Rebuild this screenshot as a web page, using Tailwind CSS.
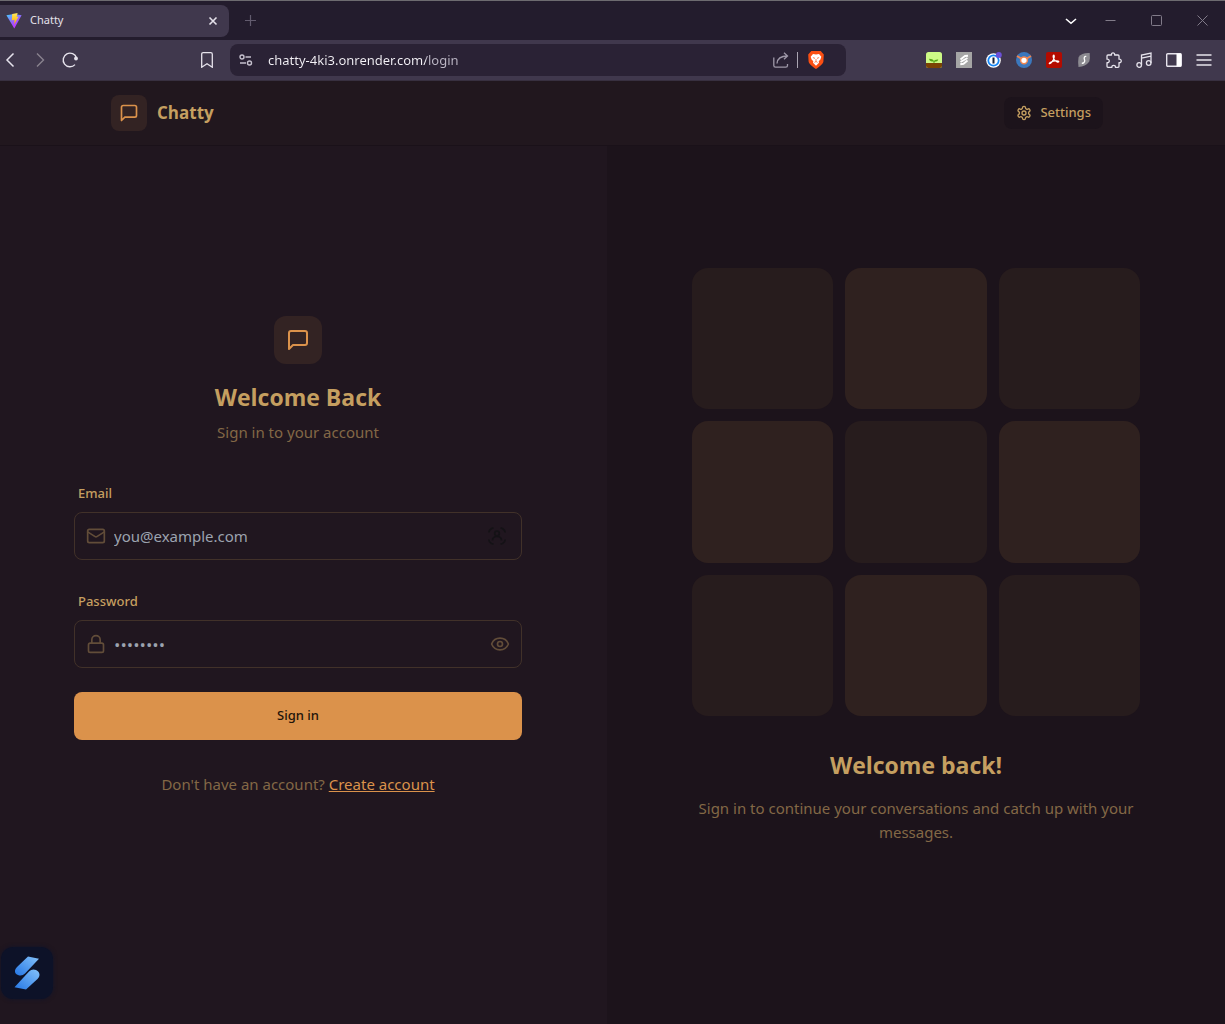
<!DOCTYPE html>
<html lang="en">
<head>
<meta charset="utf-8">
<meta name="viewport" content="width=device-width, initial-scale=1">
<title>Chatty</title>
<script src="https://cdn.jsdelivr.net/npm/@tailwindcss/browser@4"></script>
</head>
<body class="flex min-h-screen flex-col overflow-x-hidden bg-[#20161f] font-['Noto_Sans','Open_Sans',sans-serif] text-[15px] text-[#c59f60]">

<!-- Browser window: tab strip -->
<div class="flex h-10 shrink-0 items-center border-t border-[#6d6b70] bg-[#231c2d] text-[#e4e1ea]">
  <div class="flex h-8 w-[229px] items-center rounded-r-lg bg-[#40384d] pl-[6px] pr-[11px]">
    <svg class="size-4" viewBox="0 0 16 16" aria-hidden="true">
      <defs>
        <linearGradient id="vite" x1="0" y1="0" x2=".6" y2="1"><stop stop-color="#41d1ff"/><stop offset=".6" stop-color="#9a5cff"/><stop offset="1" stop-color="#c82cff"/></linearGradient>
        <linearGradient id="bolt" x1="0" y1="0" x2="0" y2="1"><stop stop-color="#ffea5a"/><stop offset="1" stop-color="#ffa800"/></linearGradient>
      </defs>
      <path d="M.4 2.2 8 1l7.6 1.2L8.3 15.6z" fill="url(#vite)"/>
      <path d="M6.200 1 11.600 0 10.600 4l2-.4-4.400 8 .3-4.800-2.700.7z" fill="url(#bolt)"/>
    </svg>
    <span class="ml-2 flex-1 text-[11px]">Chatty</span>
    <button aria-label="Close tab"><svg class="size-[10px]" viewBox="0 0 10 10" fill="none" stroke="currentColor" stroke-width="1.6"><path d="m1.500 1.500 7 7m0-7-7 7"/></svg></button>
  </div>
  <button aria-label="New tab" class="ml-4 text-[#625b6e]"><svg class="size-[11px]" viewBox="0 0 11 11" fill="none" stroke="currentColor" stroke-width="1.200"><path d="M5.500 0v11M0 5.500h11"/></svg></button>
  <div class="ml-auto flex items-center gap-[35px] pr-[17px] text-[#817b89]">
    <button aria-label="Search tabs" class="-mr-[7px] text-white"><svg class="size-3" viewBox="0 0 12 12" fill="none" stroke="currentColor" stroke-width="1.600"><path d="m1 4 5 4.300L11 4"/></svg></button>
    <button aria-label="Minimize"><svg class="size-[11px]" viewBox="0 0 11 11" stroke="currentColor"><path d="M.5 5.500h10"/></svg></button>
    <button aria-label="Maximize"><svg class="size-[11px]" viewBox="0 0 11 11" fill="none" stroke="currentColor"><rect x=".5" y=".5" width="10" height="10" rx="1"/></svg></button>
    <button aria-label="Close"><svg class="size-[11px]" viewBox="0 0 11 11" fill="none" stroke="currentColor"><path d="m.5.5 10 10m0-10-10 10"/></svg></button>
  </div>
</div>

<!-- Browser window: toolbar -->
<div class="flex h-[41px] shrink-0 items-center border-b border-[#383040] bg-[#40384d] text-[#e6e3ec]">
  <div class="flex w-[230px] shrink-0 items-center pl-[3px] pr-[15px]">
    <button aria-label="Back"><svg class="size-4" viewBox="0 0 16 16" fill="none" stroke="currentColor" stroke-width="1.500"><path d="M10.500 1.500 4 8l6.500 6.500"/></svg></button>
    <button aria-label="Forward" class="ml-[13px] text-[#89828f]"><svg class="size-4" viewBox="0 0 16 16" fill="none" stroke="currentColor" stroke-width="1.400"><path d="M5 1.500 11.500 8 5 14.500"/></svg></button>
    <button aria-label="Reload" class="ml-[13px]"><svg class="size-[18px]" viewBox="0 0 18 18" fill="none" stroke="currentColor" stroke-width="1.400"><path d="M14 13.600A6.800 6.800 0 1 1 15.500 7"/><circle cx="15" cy="7.500" r="1.900" fill="currentColor" stroke="none"/></svg></button>
    <button aria-label="Bookmark" class="ml-auto"><svg class="size-4" viewBox="0 0 16 16" fill="none" stroke="currentColor" stroke-width="1.300"><path d="M2.700 2.200Q2.700.7 4.200.7h7.600q1.500 0 1.500 1.500v13L8 11.800l-5.300 3.400z"/></svg></button>
  </div>
  <div class="flex h-8 max-w-[616px] flex-1 items-center rounded-lg bg-[#2a2235] pl-[9px] pr-[22px]">
    <svg class="size-[14px] text-[#c5c0cd]" viewBox="0 0 14 14" fill="none" stroke="currentColor" stroke-width="1.400" aria-hidden="true"><circle cx="3" cy="4" r="2"/><path d="M6.500 4H12M1 10h6"/><circle cx="10.500" cy="10" r="2"/></svg>
    <label for="address" class="sr-only">Address</label>
    <input id="address" value="chatty-4ki3.onrender.com/login" class="ml-[15px] h-8 min-w-0 flex-1 bg-[linear-gradient(90deg,#f4f2f7_158px,#bcb7c5_158px)] bg-clip-text text-[13px] text-transparent outline-none">
    <button aria-label="Share" class="text-[#9e98a8]"><svg class="size-4" viewBox="0 0 16 16" fill="none" stroke="currentColor" stroke-width="1.300"><path d="M.8 5.500v8q0 1.700 1.700 1.700h10.300q1.700 0 1.700-1.700V12M4 11.500Q4.500 4 14.500 4M11 .8 14.500 4 11 7.300"/></svg></button>
    <span class="mx-2 h-4 w-px bg-[#aaa5b2]"></span>
    <button aria-label="Brave Shields" class="ml-[2px]"><svg class="h-[18px] w-4" viewBox="0 0 16 18"><path d="M3.300 0h9.400l3.100 3.400-.4 7.100c0 2-4.200 5.600-7.400 7.500C4.800 16.100.6 12.500.6 10.500L.2 3.400z" fill="#fb4f13"/><path d="m5 3 3 .6L11 3l2.300 2.800-.9 2.600-1.700 1.900.3 1.500L8 14.700l-3-2.900.3-1.500-1.700-1.900-.9-2.600z" fill="#fff"/><path d="m4.500 6.200 2.300.5-.4 1.400zm7 0-2.300.5.4 1.400z" fill="#fb4f13"/><path d="M8 8v2.500m-1.600.9L8 10.500l1.600.9" fill="none" stroke="#fb4f13" stroke-width=".7"/></svg></button>
  </div>
  <div class="ml-auto flex items-center gap-[14px] pl-3 pr-[13px]">
    <button aria-label="Forest extension"><svg class="size-4" viewBox="0 0 16 16"><rect width="16" height="16" rx="2.500" fill="#cdfa86"/><path d="M0 11h16v2.500a2.500 2.500 0 0 1-2.500 2.500h-11A2.500 2.500 0 0 1 0 13.500z" fill="#7b4304"/><path d="M7.500 11V9.600C5 9.600 3.200 8.800 3 6.800c2.500 0 4.300.7 4.900 2.300C8.500 8 10 7.200 12.300 7.500c-.4 1.500-1.800 2.200-3.800 2.300V11z" fill="#55a516"/></svg></button>
    <button aria-label="Scribe extension"><svg class="size-4" viewBox="0 0 16 16"><path fill="#a5a5a5" d="M0 0h16v16H0z"/><path d="M4.500 7.500 9 4l3-.3M4.500 10 11.500 6M4.300 12.300l3.200-.5L11.500 8.500" fill="none" stroke="#fff" stroke-width="1.900"/></svg></button>
    <button aria-label="Password manager"><svg class="size-4" viewBox="0 0 16 16"><circle cx="7.500" cy="8.500" r="7.300" fill="#fff"/><circle cx="7.500" cy="8.500" r="5.200" fill="none" stroke="#1686f5" stroke-width="1.800"/><path d="M6.500 5.500h2v6h-2z" fill="#152036"/><circle cx="12.800" cy="3" r="3" fill="#6b50d8"/></svg></button>
    <button aria-label="Grapher extension"><svg class="size-4" viewBox="0 0 16 16"><circle cx="8" cy="8" r="8" fill="#3b78bd"/><path d="m1 4 5 3M15 4l-5 3" stroke="#ef8550" stroke-width="2"/><circle cx="8" cy="8.300" r="3.400" fill="#fff" stroke="#ef8550" stroke-width="1.500"/></svg></button>
    <button aria-label="Adobe Acrobat"><svg class="size-4" viewBox="0 0 16 16"><rect width="16" height="16" rx="2" fill="#b30b00"/><path d="M7.500 3.200c1.600-.2.500 4.200-1.500 6.600-2 2.500-3.800 2.200-2 .8 2.500-1.700 8-2.500 8.700-1.200.4 1.400-3.200.4-4.500-1.900-1-1.800-1.500-4-.7-4.300z" fill="none" stroke="#fff" stroke-width="1.200"/></svg></button>
    <button aria-label="Shortcut extension"><svg class="size-4" viewBox="0 0 16 16"><path d="M2.600 5Q6 .5 13.700 1q.6 5-.4 8.500Q9.500 14.800 2.500 15 1.800 9 2.600 5z" fill="#8c8b91"/><path d="M10.300 4.500C8.800 4 8.300 5 8.200 6.200S9.300 8 8.500 9.800 7 11.300 5.800 11.200" fill="none" stroke="#fff" stroke-width="1.300"/></svg></button>
    <button aria-label="Extensions"><svg class="size-4" viewBox="0 0 16 16" fill="none" stroke="currentColor" stroke-width="1.300" stroke-linejoin="round"><path d="M2 3h3.500C4.700.2 9.300.2 8.600 3H12q1 0 1 1v3.200c3-.5 3 4 0 3.500v3.600q0 1-1 1H9.400c.5-2.700-4-2.700-3.500 0H2q-1 0-1-1v-3.600c3 .4 3-3.900 0-3.500V4q0-1 1-1z"/></svg></button>
    <button aria-label="Media"><svg class="size-4" viewBox="0 0 16 16" fill="none" stroke="currentColor" stroke-width="1.300"><circle cx="3.200" cy="13" r="2.300"/><circle cx="12.700" cy="11" r="2.300"/><path d="M5.500 13V3L15 1v10M5.500 6.200 15 4.200"/></svg></button>
    <button aria-label="Side panel"><svg class="size-4" viewBox="0 0 16 16"><rect x=".7" y="1.700" width="14.600" height="12.600" rx="1" fill="none" stroke="currentColor" stroke-width="1.400"/><path d="M10.500 1.500H15v13h-4.500z" fill="#fff"/></svg></button>
    <button aria-label="Menu"><svg class="size-4" viewBox="0 0 16 16" stroke="currentColor" stroke-width="1.400"><path d="M.5 3h15M.5 8h15M.5 13h15"/></svg></button>
  </div>
</div>

<!-- Site, scrolled sideways a little so its left edge lies outside the window -->
<div class="-ml-[11px] flex flex-1 flex-col">
  <header class="border-b border-[#1a1119] bg-[#21171e]">
    <div class="mx-auto flex h-16 max-w-[1024px] items-center justify-between px-4">
      <a href="/" class="flex items-center gap-[10px]">
        <span class="flex size-9 items-center justify-center rounded-lg bg-[#332323] text-[#db924b]">
          <svg class="size-5" viewBox="0 0 24 24" fill="none" stroke="currentColor" stroke-width="2" stroke-linecap="round" stroke-linejoin="round"><path d="M21 15a2 2 0 0 1-2 2H7l-4 4V5a2 2 0 0 1 2-2h14a2 2 0 0 1 2 2z"/></svg>
        </span>
        <span class="font-['Open_Sans',sans-serif] text-[17px] font-bold">Chatty</span>
      </a>
      <a href="/settings" class="flex h-8 items-center gap-2 rounded-lg bg-[#1c131b] px-3 text-[13px] font-medium">
        <svg class="size-4" viewBox="0 0 24 24" fill="none" stroke="currentColor" stroke-width="2" stroke-linecap="round" stroke-linejoin="round"><path d="M12.220 2h-.440a2 2 0 0 0-2 2v.180a2 2 0 0 1-1 1.730l-.430.250a2 2 0 0 1-2 0l-.150-.080a2 2 0 0 0-2.730.730l-.220.380a2 2 0 0 0 .730 2.730l.150.100a2 2 0 0 1 1 1.720v.510a2 2 0 0 1-1 1.740l-.150.090a2 2 0 0 0-.730 2.730l.220.380a2 2 0 0 0 2.730.730l.150-.080a2 2 0 0 1 2 0l.430.250a2 2 0 0 1 1 1.730V20a2 2 0 0 0 2 2h.440a2 2 0 0 0 2-2v-.180a2 2 0 0 1 1-1.730l.430-.250a2 2 0 0 1 2 0l.150.080a2 2 0 0 0 2.730-.730l.220-.390a2 2 0 0 0-.730-2.730l-.150-.080a2 2 0 0 1-1-1.740v-.500a2 2 0 0 1 1-1.740l.150-.090a2 2 0 0 0 .730-2.730l-.220-.380a2 2 0 0 0-2.730-.730l-.150.080a2 2 0 0 1-2 0l-.430-.250a2 2 0 0 1-1-1.730V4a2 2 0 0 0-2-2z"/><circle cx="12" cy="12" r="3"/></svg>
        Settings
      </a>
    </div>
  </header>

  <main class="grid flex-1 grid-cols-2">
    <section class="flex items-center justify-center px-12 pb-[58px]">
      <div class="w-full max-w-md">
        <div class="mb-8 flex flex-col items-center">
          <div class="flex size-12 items-center justify-center rounded-xl bg-[#332323] text-[#db924b]">
            <svg class="size-6" viewBox="0 0 24 24" fill="none" stroke="currentColor" stroke-width="2" stroke-linecap="round" stroke-linejoin="round"><path d="M21 15a2 2 0 0 1-2 2H7l-4 4V5a2 2 0 0 1 2-2h14a2 2 0 0 1 2 2z"/></svg>
          </div>
          <h1 class="mt-4 pt-px font-['Open_Sans',sans-serif] text-[23px] leading-8 font-bold">Welcome Back</h1>
          <p class="mt-[7px] leading-6 text-[#836846]">Sign in to your account</p>
        </div>
        <form>
          <label for="email" class="flex h-9 items-center px-1 text-[13px] font-medium">Email</label>
          <div class="flex h-12 items-center rounded-lg border border-[#413129] pl-[11px] pr-3">
            <svg class="size-5 text-[#624d39]" viewBox="0 0 24 24" fill="none" stroke="currentColor" stroke-width="2" stroke-linecap="round" stroke-linejoin="round"><rect width="20" height="16" x="2" y="4" rx="2"/><path d="m22 7-8.970 5.700a1.940 1.940 0 0 1-2.060 0L2 7"/></svg>
            <input id="email" type="email" placeholder="you@example.com" class="ml-2 h-10 min-w-0 flex-1 bg-transparent outline-none placeholder:text-[#9ca3af]">
            <svg class="mr-[2px] size-5 text-[#141216]" viewBox="0 0 20 20" fill="none" stroke="currentColor" stroke-width="1.700" aria-hidden="true"><path d="M1.800 6.500q.5-3.700 4.700-4.700M13.500 1.800q4.200 1 4.700 4.700M18.200 13.500q-.5 3.700-4.700 4.700M6.500 18.200q-4.200-1-4.700-4.700M5.500 14.500q0-4 4.500-4t4.500 4"/><circle cx="10" cy="7.500" r="2.300"/></svg>
          </div>
          <label for="password" class="mt-6 flex h-9 items-center px-1 text-[13px] font-medium">Password</label>
          <div class="flex h-12 items-center rounded-lg border border-[#413129] pl-[11px] pr-3">
            <svg class="size-5 text-[#624d39]" viewBox="0 0 24 24" fill="none" stroke="currentColor" stroke-width="2" stroke-linecap="round" stroke-linejoin="round"><rect width="18" height="11" x="3" y="11" rx="2"/><path d="M7 11V7a5 5 0 0 1 10 0v4"/></svg>
            <input id="password" type="password" placeholder="••••••••" class="ml-2 h-10 min-w-0 flex-1 bg-transparent font-['Open_Sans',sans-serif] text-[17px] outline-none placeholder:text-[#9ca3af]">
            <button type="button" aria-label="Show password" class="text-[#624d39]"><svg class="-mr-px size-5" viewBox="0 0 24 24" fill="none" stroke="currentColor" stroke-width="2" stroke-linecap="round" stroke-linejoin="round"><path d="M2.062 12.348a1 1 0 0 1 0-.696 10.750 10.750 0 0 1 19.876 0 1 1 0 0 1 0 .696 10.750 10.750 0 0 1-19.876 0"/><circle cx="12" cy="12" r="3"/></svg></button>
          </div>
          <button type="submit" class="mt-6 h-12 w-full rounded-lg bg-[#db924b] text-[13px] font-medium text-[#22140a]">Sign in</button>
        </form>
        <p class="mt-8 text-center leading-6 text-[#836846]">Don't have an account? <a href="/signup" class="text-[#db924b] underline">Create account</a></p>
      </div>
    </section>

    <section class="flex items-center justify-center bg-[#1c131b] px-12 pb-[58px]">
      <div class="w-full max-w-md text-center">
        <div class="mb-8 grid grid-cols-3 gap-3">
          <div class="aspect-square rounded-2xl bg-[#271c1d]"></div>
          <div class="aspect-square rounded-2xl bg-[#2f211f]"></div>
          <div class="aspect-square rounded-2xl bg-[#271c1d]"></div>
          <div class="aspect-square rounded-2xl bg-[#2f211f]"></div>
          <div class="aspect-square rounded-2xl bg-[#271c1d]"></div>
          <div class="aspect-square rounded-2xl bg-[#2f211f]"></div>
          <div class="aspect-square rounded-2xl bg-[#271c1d]"></div>
          <div class="aspect-square rounded-2xl bg-[#2f211f]"></div>
          <div class="aspect-square rounded-2xl bg-[#271c1d]"></div>
        </div>
        <h2 class="mb-[15px] pt-px font-['Open_Sans',sans-serif] text-[23px] leading-8 font-bold">Welcome back!</h2>
        <p class="leading-6 text-[#836846]">Sign in to continue your conversations and catch up with your messages.</p>
      </div>
    </section>
  </main>
</div>

<!-- Floating extension button -->
<button aria-label="Open Scribe" class="fixed bottom-[25px] left-px flex size-[52px] items-center justify-center rounded-xl bg-[#0d1228] shadow-[0_0_4px_#10142a]">
  <svg class="h-[34px] w-[26px]" viewBox="0 0 26 34">
    <defs><linearGradient id="scribe" x1="1" y1="0" x2="0" y2="1"><stop stop-color="#84c2fa"/><stop offset="1" stop-color="#2577e5"/></linearGradient></defs>
    <path d="M14 .5 25 2.800 11 17.500Q8 20.500 4 19 .5 17.500 1 14.500 1 13 3 11z" fill="url(#scribe)"/>
    <path d="M12 33.500.5 31.200 15 15.500Q18 12.500 22 14q3.500 1.500 3.500 5 0 2-2 4z" fill="url(#scribe)"/>
  </svg>
</button>
</body>
</html>
